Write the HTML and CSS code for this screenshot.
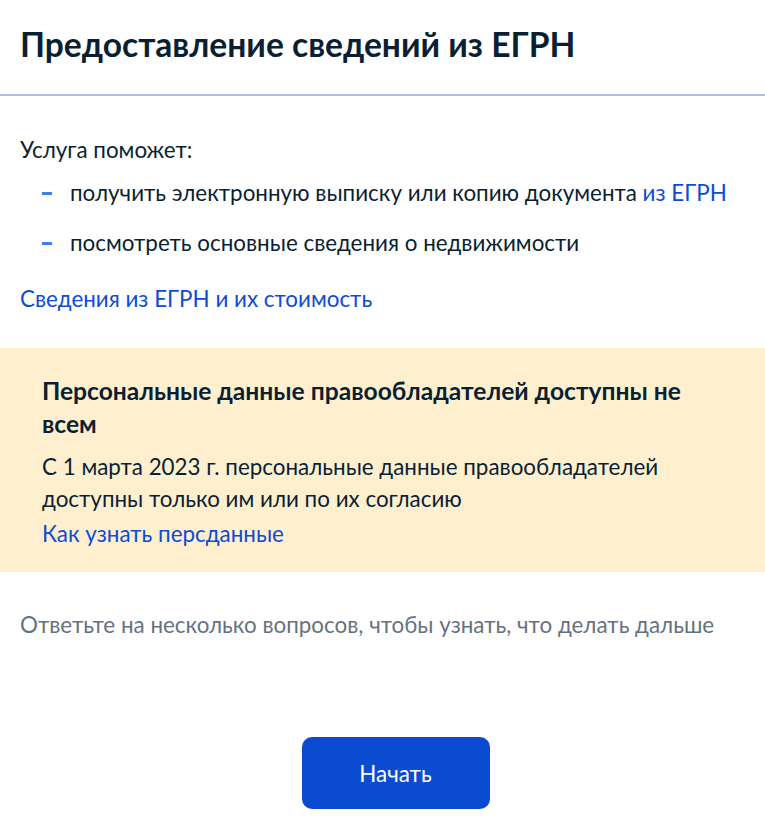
FILE: index.html
```html
<!DOCTYPE html>
<html lang="ru">
<head>
    <meta charset="UTF-8">
    <meta name="viewport" content="width=device-width, initial-scale=1.0">
    <title>Предоставление сведений из ЕГРН</title>
    <link rel="stylesheet" href="styles.css">
</head>
<body>
    <header class="page-header">
        <h1>Предоставление сведений из ЕГРН</h1>
    </header>

    <section class="intro">
        <p class="intro-lead">Услуга поможет:</p>
        <ul class="dash-list">
            <li>получить электронную выписку или копию документа <a href="#">из ЕГРН</a></li>
            <li>посмотреть основные сведения о недвижимости</li>
        </ul>
        <a class="intro-link" href="#">Сведения из ЕГРН и их стоимость</a>
    </section>

    <section class="notice">
        <h2>Персональные данные правообладателей доступны не всем</h2>
        <p>С 1 марта 2023 г. персональные данные правообладателей доступны только им или по их согласию</p>
        <a href="#">Как узнать персданные</a>
    </section>

    <p class="hint">Ответьте на несколько вопросов, чтобы узнать, что делать дальше</p>

    <div class="actions">
        <button class="start-btn">Начать</button>
    </div>
</body>
</html>
```

FILE: styles.css
```css
body {
    margin: 0;
    font-family: 'Lato', 'Noto Sans', sans-serif;
    font-size: 22.4px;
    color: #0b1f33;
    background-color: #fff;
}
a {
    color: #0d4cd3;
    text-decoration: none;
}
.page-header {
    padding: 22px 20px 0;
    height: 72px;
    border-bottom: 2px solid #a9bfe9;
}
h1 {
    margin: 0;
    font-size: 33.6px;
    line-height: 44px;
    font-weight: 700;
}
.intro {
    padding: 0 20px;
}
.intro-lead {
    margin: 40px 0 0;
    line-height: 28px;
}
.dash-list {
    list-style: none;
    margin: 15px 0 0;
    padding: 0 0 0 22px;
}
.dash-list li {
    position: relative;
    padding-left: 28px;
    line-height: 28px;
    margin-bottom: 22px;
}
.dash-list li:last-child {
    margin-bottom: 0;
}
.dash-list li::before {
    content: '';
    position: absolute;
    left: 0;
    top: 13px;
    width: 10px;
    height: 3px;
    background-color: #3a80e8;
}
.intro-link {
    display: block;
    margin-top: 28px;
    line-height: 28px;
}
.notice {
    margin-top: 35px;
    padding: 26px 42px 22px;
    background-color: #feefcf;
}
.notice h2 {
    margin: 0;
    font-size: 24.6px;
    line-height: 33px;
    font-weight: 700;
}
.notice p {
    margin: 11px 0 0;
    line-height: 32px;
}
.notice a {
    display: block;
    margin-top: 3px;
    line-height: 32px;
}
.hint {
    margin: 39px 20px 0;
    color: #66727f;
    line-height: 28px;
}
.actions {
    display: flex;
    justify-content: center;
    margin-top: 98px;
    padding-left: 26px;
}
.start-btn {
    width: 188px;
    height: 72px;
    border: none;
    border-radius: 10px;
    background-color: #0b4bd1;
    color: #fff;
    font-family: 'Lato', sans-serif;
    font-size: 22.4px;
    cursor: pointer;
}
```
